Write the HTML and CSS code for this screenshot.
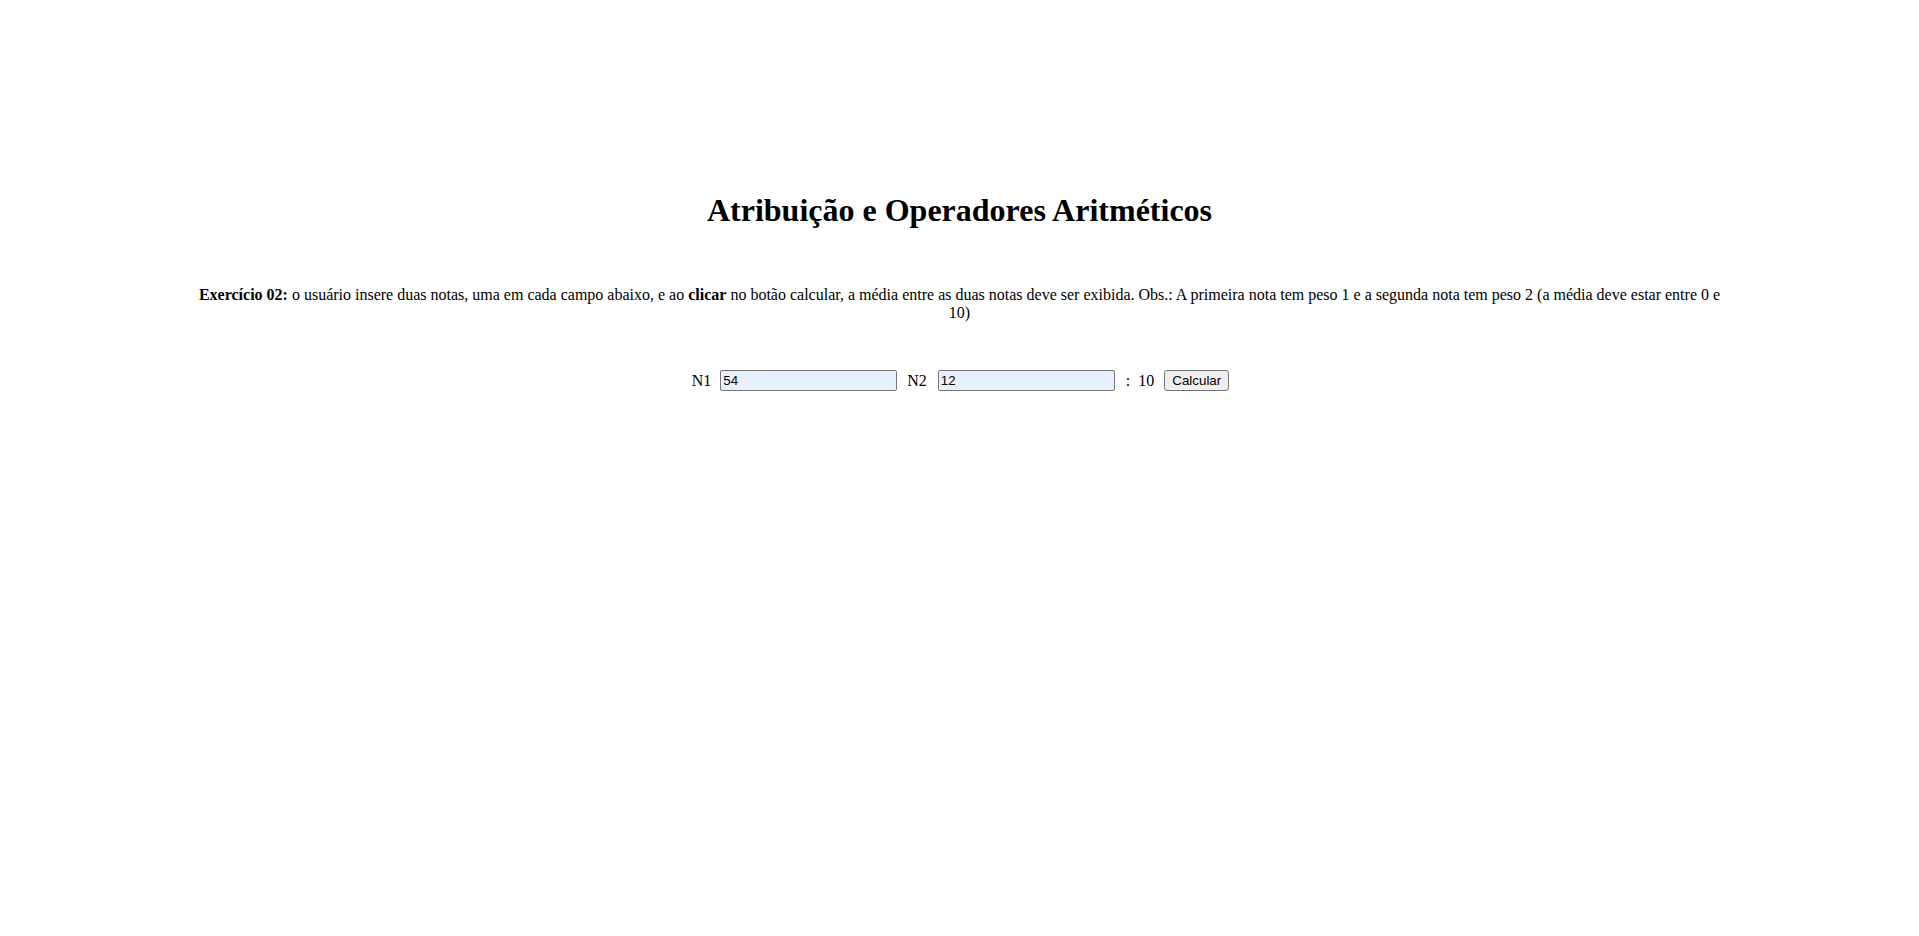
FILE: index.html
```html
<!DOCTYPE html>
<html lang="pt-BR">
<head>
<meta charset="utf-8">
<title>Atribuição e Operadores Aritméticos</title>
<link rel="stylesheet" href="styles.css">
</head>
<body>
<div class="page">
  <h1 class="title">Atribuição e Operadores Aritméticos</h1>
  <p class="desc"><strong>Exercício 02:</strong> o usuário insere duas notas, uma em cada campo abaixo, e ao <strong>clicar</strong> no botão calcular, a média entre as duas notas deve ser exibida. Obs.: A primeira nota tem peso 1 e a segunda nota tem peso 2 (a média deve estar entre 0 e 10)</p>
  <div class="form">
    <label class="lbl" for="n1">N1</label>
    <input id="n1" type="text" class="field" value="54">
    <label class="lbl lbl-2" for="n2">N2</label>
    <input id="n2" type="text" class="field" value="12">
    <span class="sep">:</span>
    <span class="result">10</span>
    <button class="btn">Calcular</button>
  </div>
</div>
</body>
</html>
```
FILE: styles.css
```css
body {
  margin: 8px;
  font-family: "Liberation Serif", "Times New Roman", serif;
  background: #fff;
  color: #000;
}
.page {
  width: 80%;
  margin: 0 auto;
  padding-top: 184px;
  text-align: center;
}
.title {
  font-size: 32px;
  margin: 0 0 57px;
}
.desc {
  font-size: 16px;
  margin: 0 0 48px;
}
.form {
  display: flex;
  justify-content: center;
  align-items: center;
  font-size: 16px;
  padding-left: 2px;
}
.lbl {
  margin-right: 9px;
}
.lbl-2 {
  margin-right: 11px;
}
.field {
  box-sizing: border-box;
  width: 177px;
  height: 21px;
  padding: 1px 2px;
  border: 1px solid #767676;
  border-radius: 2px;
  background: #e8f0fe;
  color: #000;
  font-family: Arial, "Liberation Sans", sans-serif;
  font-size: 13.333px;
  margin-right: 10px;
}
.sep {
  margin-left: 1px;
  margin-right: 8px;
}
.result {
  margin-right: 10px;
}
.btn {
  box-sizing: border-box;
  height: 21px;
  width: 65px;
  padding: 1px 6px;
  border: 1px solid #767676;
  border-radius: 3px;
  background: #efefef;
  color: #000;
  font-family: Arial, "Liberation Sans", sans-serif;
  font-size: 13.333px;
}
```
